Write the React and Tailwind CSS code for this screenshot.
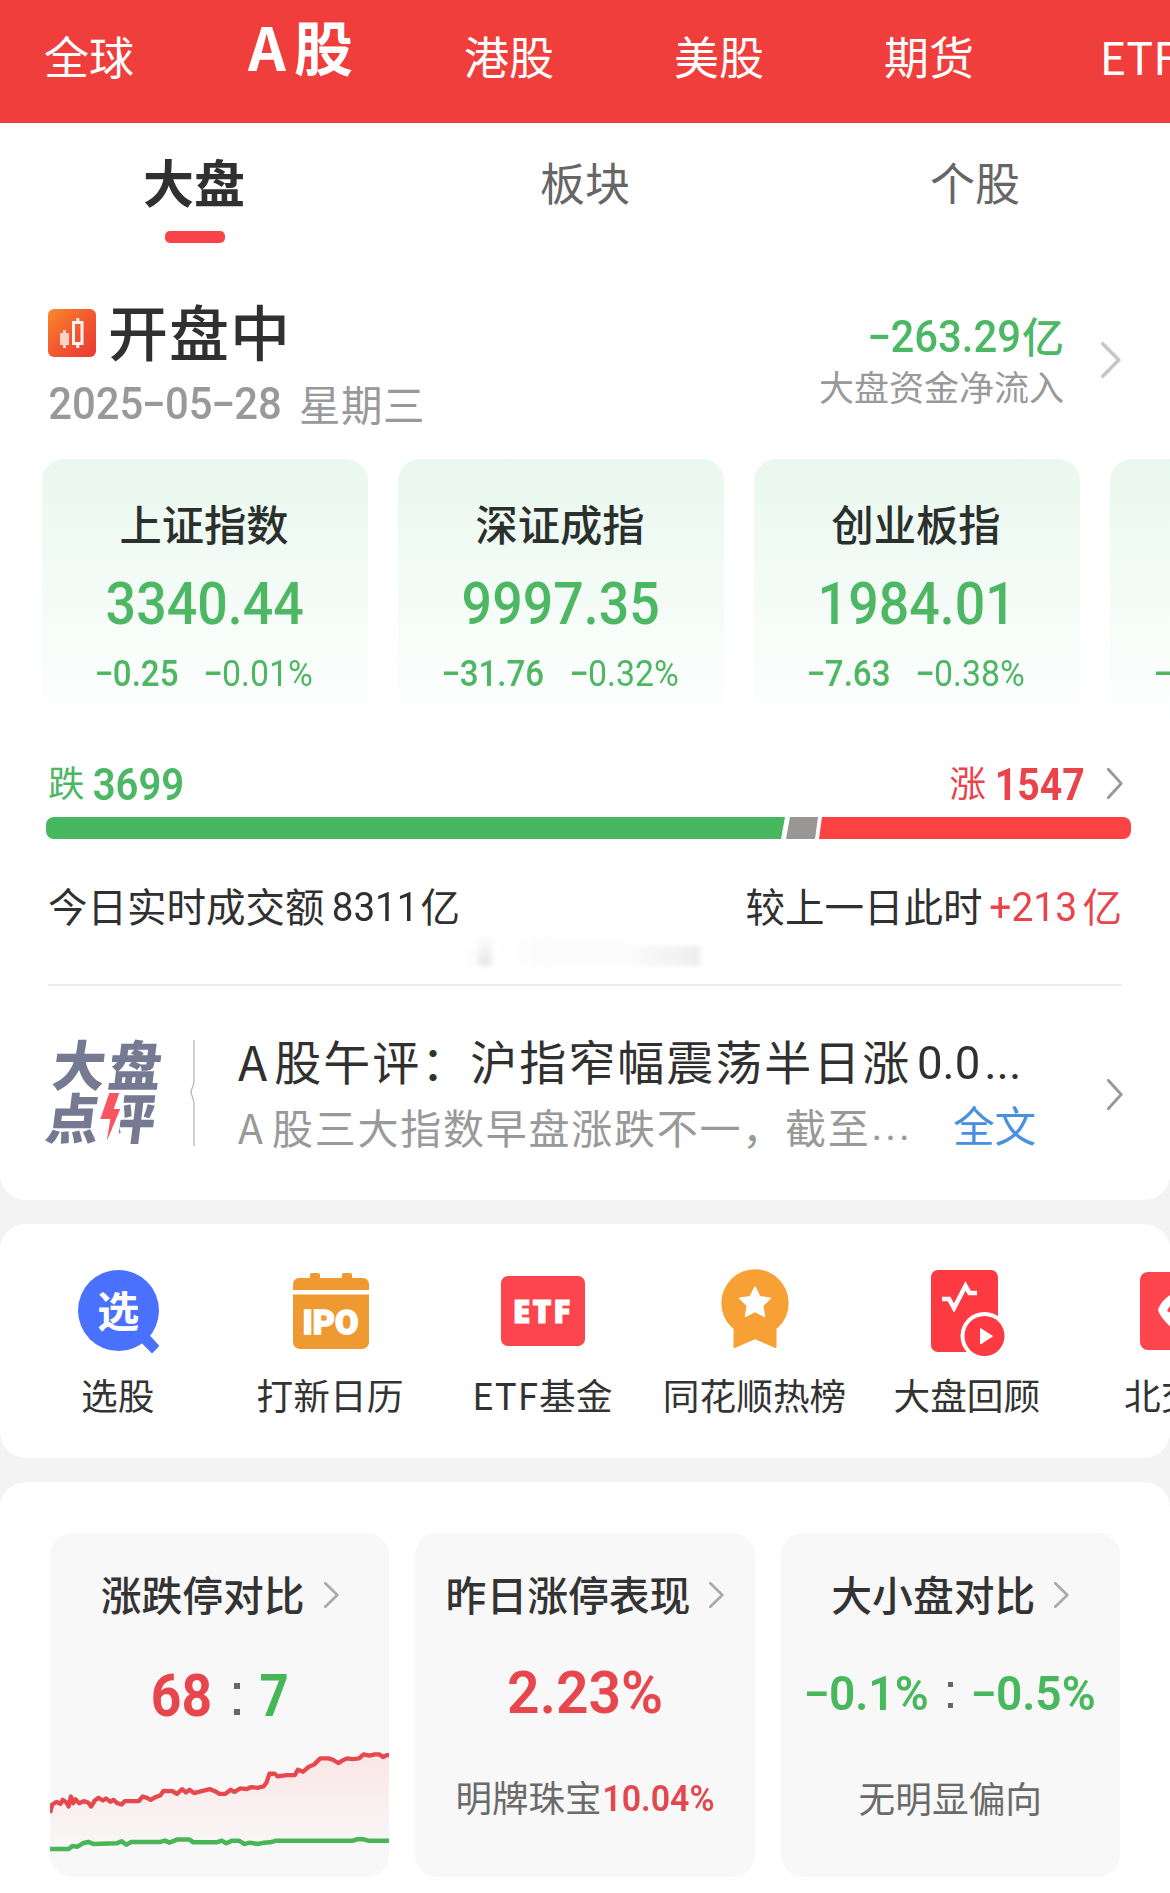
import React from "react";

const CJK = "font-['Noto_Sans_CJK_SC',sans-serif]";

// Narrow numeric text: a fixed-width box with horizontally condensed digits centred in it.
function Num({ children, box, scale, className = "" }) {
  return (
    <span className={`inline-flex shrink-0 justify-center whitespace-nowrap font-[Roboto,sans-serif] ${box} ${className}`}>
      <span className={`inline-block shrink-0 ${scale}`}>
        {children.split("").map((c, i) =>
          c === "-" ? (
            <span key={i} className="relative -top-[0.04em] inline-block w-[0.52em] scale-x-[1.65] text-center font-medium">-</span>
          ) : (
            c
          )
        )}
      </span>
    </span>
  );
}

function Chevron({ className, width = 3.2 }) {
  return (
    <svg viewBox="0 0 18 32" fill="none" stroke="currentColor" strokeWidth={width} className={className} preserveAspectRatio="none">
      <path d="M1.5 1.5 L16 16 L1.5 30.5" strokeLinejoin="round" strokeLinecap="round" />
    </svg>
  );
}

const markets = ["全球", "A股", "港股", "美股", "期货", "ETF"];

function Header() {
  return (
    <header className="h-[123px] overflow-hidden bg-[#ef3e3b] text-white">
      <nav className="-ml-4 flex w-[1260px] text-[45px] leading-none">
        {markets.map((m) =>
          m === "A股" ? (
            <div key={m} className="flex h-[90px] w-[210px] items-center justify-center gap-[8px] pl-[3px] text-[59px] font-bold">
              <span>A</span>
              <span>股</span>
            </div>
          ) : (
            <div key={m} className="flex h-[110px] w-[210px] items-center justify-center">{m}</div>
          )
        )}
      </nav>
    </header>
  );
}

function SubTabs() {
  return (
    <div className="grid h-[120px] grid-cols-3 pt-[31px] text-center text-[45px] leading-[55px] text-[#666]">
      <div className="flex flex-col items-center">
        <span className="pr-0.5 text-[51px] font-bold text-[#303030]">大盘</span>
        <span className="mt-[22px] h-3 w-[60px] rounded-[5px] bg-[#fa4349]" />
      </div>
      <div>板块</div>
      <div>个股</div>
    </div>
  );
}

function Status() {
  return (
    <div className="mt-[57px] flex h-[126px] justify-between pr-[49px] pl-12">
      <div>
        <div className="flex h-[60px] items-center">
          <svg viewBox="0 0 48 48" className="mt-1.5 h-12 w-12">
            <defs>
              <linearGradient id="kline" x1="0" y1="0" x2="1" y2="1">
                <stop offset="0" stopColor="#f98a2c" />
                <stop offset="0.5" stopColor="#f2592f" />
                <stop offset="1" stopColor="#e93a33" />
              </linearGradient>
            </defs>
            <rect width="48" height="48" rx="6" fill="url(#kline)" />
            <path d="M12 24h9v12h-9z M15 21h3v18h-3z" fill="#ffd2c4" />
            <path d="M25.500 13.500h8.500v21h-8.500z M29.800 9v4 M29.800 35v4" fill="none" stroke="#fff4ee" strokeWidth="3" />
          </svg>
          <span className="ml-3 text-[60px] leading-[60px] font-medium tracking-[1px] text-[#303030]">开盘中</span>
        </div>
        <div className="mt-[22px] flex h-11 items-center text-[#999]">
          <Num box="w-[234px]" scale="scale-x-[0.95]" className="text-[44px] font-medium">2025-05-28</Num>
          <span className="ml-[17px] pb-0.5 text-[41.500px] leading-[44px] tracking-[0.500px]">星期三</span>
        </div>
      </div>
      <div className="flex">
        <div className="flex flex-col items-end pt-[15px]">
          <div className="flex h-11 items-center text-[#4cb765]">
            <Num box="w-[155px]" scale="scale-x-[0.93]" className="text-[45px] font-medium">-263.29</Num>
            <span className="pb-[5px] text-[42px] leading-[44px] font-medium">亿</span>
          </div>
          <div className="mt-[7px] h-10 text-[35px] leading-10 text-[#999]">大盘资金净流入</div>
        </div>
        <Chevron className="mt-[42px] ml-[37px] h-9 w-5 text-[#c6c6c6]" />
      </div>
    </div>
  );
}

const indices = [
  { name: "上证指数", value: "3340.44", diff: "-0.25", diffBox: "w-[82px]", pct: "-0.01%" },
  { name: "深证成指", value: "9997.35", diff: "-31.76", diffBox: "w-[101px]", pct: "-0.32%" },
  { name: "创业板指", value: "1984.01", diff: "-7.63", diffBox: "w-[82px]", pct: "-0.38%" },
  { name: "北证50", value: "1402.11", diff: "-13.42", diffBox: "w-[101px]", pct: "-0.95%" },
];

function IndexCards() {
  return (
    <div className="mt-[33px] flex gap-[30px] overflow-hidden pl-[42px]">
      {indices.map((c) => (
        <div key={c.name} className="flex h-[272px] w-[326px] shrink-0 flex-col items-center rounded-[22px] bg-linear-to-b from-[#e9f8ef] to-white pt-[34px]">
          <div className="h-[60px] pr-0.5 text-[42.300px] leading-[60px] font-medium text-[#2c302d]">{c.name}</div>
          <Num box="w-[200px]" scale="scale-x-[0.895]" className="mt-[21px] h-[60px] text-[60px] leading-[60px] font-medium text-[#4db764]">{c.value}</Num>
          <div className="mt-5 flex h-10 gap-[26px] text-[36px] leading-10 text-[#4db764]">
            <Num box={c.diffBox} scale="scale-x-[0.92]" className="font-medium">{c.diff}</Num>
            <Num box="w-[110px]" scale="scale-x-[0.94]">{c.pct}</Num>
          </div>
        </div>
      ))}
    </div>
  );
}

function Breadth() {
  return (
    <>
      <div className="mt-[33px] flex h-10 justify-between pr-[47px] pl-12 leading-10">
        <div className="flex text-[#4cb765]">
          <span className="-mt-0.5 text-[36.500px]">跌</span>
          <Num box="ml-[7px] w-[94px] pt-px" scale="scale-x-[0.89]" className="text-[45px] font-semibold">3699</Num>
        </div>
        <div className="flex text-[#ea444b]">
          <span className="-mt-0.5 text-[36.500px]">涨</span>
          <Num box="ml-[7px] w-[94px] pt-px" scale="scale-x-[0.87]" className="text-[45px] font-bold">1547</Num>
          <Chevron className="mt-1 ml-[20px] h-[31px] w-4 text-[#999]" />
        </div>
      </div>
      <div className="mt-[13px] ml-[46px] flex h-[22px] w-[1085px] gap-px overflow-hidden rounded-[8px]">
        <div className="w-[739px] bg-[#47b85f] [clip-path:polygon(0_0,100%_0,calc(100%-4px)_100%,0_100%)]" />
        <div className="w-[32px] bg-[#999696] [clip-path:polygon(4px_0,100%_0,calc(100%-3px)_100%,0_100%)]" />
        <div className="flex-1 bg-[#fe4342] [clip-path:polygon(3px_0,100%_0,100%_100%,0_100%)]" />
      </div>
      <div className="relative mx-12 mt-[41px] flex h-[106px] justify-between border-b-2 border-[#ececec] text-[39.5px] leading-[50px] text-[#303030]">
        <div className="flex">
          <span>今日实时成交额</span>
          <Num box="ml-[8px] h-[52px] w-[86px]" scale="scale-x-[0.94]" className="text-[41px] leading-[54px]">8311</Num>
          <span className="ml-0.5">亿</span>
        </div>
        <div className="flex">
          <span>较上一日此时</span>
          <span className="flex text-[#ea444b]">
            <Num box="ml-[5px] h-[52px] w-[92px]" scale="scale-x-[0.95]" className="text-[41px] leading-[54px]">+213</Num>
            <span className="ml-[3px]">亿</span>
          </span>
        </div>
        <div className="absolute top-[50px] left-[418px] flex h-9 w-[234px] items-end blur-[2px]">
          <div className="h-4 w-3 bg-[#fcfcfc]" />
          <div className="h-[33px] w-[14px] bg-linear-to-b from-white to-[#e8e8e8]" />
          <div className="h-7 flex-1 bg-linear-to-r from-white via-[#fbfbfb] to-[#fbfbfb]" />
          <div className="h-5 w-[76px] bg-linear-to-r from-[#fcfcfc] to-[#eeeeee]" />
        </div>
      </div>
    </>
  );
}

function Commentary() {
  return (
    <div className="flex h-[212px] pl-12">
      <div className="relative mt-[52px] mr-[-2px] ml-0.5 grid h-[106px] w-[114px] -skew-x-[7deg] grid-cols-[56px_58px] text-[54px] leading-[50px] font-black text-[#757a92]">
        <span className="h-[53px] w-[54px] origin-left scale-x-[0.98]">大</span>
        <span className="h-[53px] w-[54px] origin-left scale-x-[0.98]">盘</span>
        <span className="h-[53px] w-[54px] origin-left scale-x-[0.98]">点</span>
        <span className="h-[53px] w-[54px] origin-left scale-x-[0.98] [clip-path:inset(-10px_-10px_-10px_34%)]">评</span>
        <svg viewBox="0 0 20 50" className="absolute top-[54px] left-[53px] h-[50px] w-[21px] skew-x-[7deg]">
          <path d="M9 1 L19 1 L13.500 17 L20 17 L6.500 49 L10 27 L0 27 Z" fill="#fa5560" />
        </svg>
      </div>
      <svg viewBox="0 0 8 106" className="mt-[54px] ml-[26px] h-[106px] w-2" fill="none" stroke="#b8b8b8" strokeWidth="1.300">
        <path d="M6 0V41C6 47 3 49 3 52C3 55 6 58 6 64V106" />
      </svg>
      <div className="mt-[44px] ml-[42px] w-[800px]">
        <div className="flex h-[60px] leading-[60px] whitespace-nowrap text-[#303030]">
          <span className="text-[48px]">A</span>
          <span className="ml-[7px] text-[47px] tracking-[2px]">股午评：沪指窄幅震荡半日涨</span>
          <Num box="ml-[3px] h-[60px] w-[68px]" scale="scale-x-[0.97]" className="pt-[3px] text-[47px]">0.0</Num>
          <span className="ml-0.5 font-[Roboto] text-[47px] leading-[65px]">...</span>
        </div>
        <div className="mt-[11px] flex h-[50px] text-[41px] leading-[51px] whitespace-nowrap text-[#999]">
          <span>A</span>
          <span className="ml-[9px] tracking-[1.750px]">股三大指数早盘涨跌不一，截至</span>
          <span className="ml-px font-[Roboto] tracking-[3px]">...</span>
          <span className="-mt-0.5 ml-[40px] text-[41.500px] leading-[50px] text-[#4a8fdc]">全文</span>
        </div>
      </div>
      <Chevron className="mt-[93px] ml-[69px] h-[31px] w-4 text-[#999]" />
    </div>
  );
}

const iconText = "absolute inset-0 flex items-center justify-center leading-none text-white";

const shortcuts = [
  {
    label: "选股",
    icon: (
      <>
        <svg viewBox="0 0 90 90" className="h-[90px] w-[90px]">
          <circle cx="45.500" cy="45.500" r="40.500" fill="#4a70fe" />
          <path d="M70 78 L76 71 L85 81 L79 87 Z" fill="#4a70fe" stroke="#4a70fe" strokeWidth="2" strokeLinejoin="round" />
        </svg>
        <span className={`${iconText} pb-[3px] text-[42px] font-bold`}>选</span>
      </>
    ),
  },
  {
    label: "打新日历",
    icon: (
      <>
        <svg viewBox="0 0 90 90" className="h-[90px] w-[90px]" fill="#ee9a30">
          <rect x="25" y="8" width="10" height="12" rx="2" />
          <rect x="57" y="8" width="10" height="12" rx="2" />
          <path d="M8 25V19a6 6 0 0 1 6-6H78a6 6 0 0 1 6 6V25Z" />
          <path d="M8 29.500H84V77a7 7 0 0 1-7 7H15a7 7 0 0 1-7-7Z" />
        </svg>
        <span className={`${iconText} pt-[23px] font-[Roboto,sans-serif] text-[34px] font-black [-webkit-text-stroke:1.5px_#fff]`}>IPO</span>
      </>
    ),
  },
  {
    label: "ETF基金",
    icon: (
      <>
        <svg viewBox="0 0 90 90" className="h-[90px] w-[90px]">
          <rect x="3" y="11" width="84" height="70" rx="7" fill="#fc454d" />
        </svg>
        <span className={`${iconText} pt-px font-['Noto_Sans',sans-serif] text-[32px] font-black tracking-[2px] [-webkit-text-stroke:1px_#fff]`}>ETF</span>
      </>
    ),
  },
  {
    label: "同花顺热榜",
    icon: (
      <svg viewBox="0 0 90 90" className="h-[90px] w-[90px]">
        <circle cx="45" cy="38" r="33.700" fill="#f7a035" />
        <path d="M24.500 58H65.500V82L45 73L24.500 82Z" fill="#f7a035" stroke="#f7a035" strokeWidth="2" strokeLinejoin="round" />
        <path d="M45 22l4.700 9.700 10.600 1.500-7.700 7.500 1.900 10.700-9.500-5.100-9.500 5.100 1.900-10.700-7.700-7.500 10.600-1.500z" fill="#fff" stroke="#fff" strokeWidth="1.500" strokeLinejoin="round" />
      </svg>
    ),
  },
  {
    label: "大盘回顾",
    icon: (
      <svg viewBox="0 0 90 92" className="h-[92px] w-[90px]">
        <rect x="9" y="5" width="67" height="82" rx="7" fill="#fd3a41" />
        <path d="M20 34H27L32 43L43.500 21L47.500 28H55" fill="none" stroke="#fff" strokeWidth="4.500" />
        <circle cx="62.500" cy="71" r="24" fill="#fff" />
        <circle cx="62.500" cy="71" r="20" fill="#fd3a41" />
        <path d="M58.500 63.500V79L70.500 71.200Z" fill="#fff" stroke="#fff" strokeLinejoin="round" />
      </svg>
    ),
  },
  {
    label: "北交所",
    icon: (
      <svg viewBox="0 0 90 90" className="h-[90px] w-[90px]">
        <rect x="5" y="7" width="80" height="78" rx="8" fill="#fc454d" />
        <path d="M45 25Q27 32 23 45Q26 55 45 70L60 55L50 47L45 52L32 46Q35 38 45 35Z" fill="#fff" />
      </svg>
    ),
  },
];

function Shortcuts() {
  return (
    <section className="mt-6 h-[234px] overflow-hidden rounded-[26px] bg-white pt-[41px]">
      <div className="ml-3 flex w-[1274px]">
        {shortcuts.map((s) => (
          <div key={s.label} className="flex h-[180px] w-[212.300px] flex-col items-center">
            <div className="relative h-[90px] w-[90px]">{s.icon}</div>
            <div className="mt-[14px] h-[50px] pr-px text-[36.700px] leading-[50px] whitespace-nowrap text-[#333]">
              {s.label === "ETF基金" ? <><span className="tracking-[1px]">ETF</span>基金</> : s.label}
            </div>
          </div>
        ))}
      </div>
    </section>
  );
}

const riseLine =
  "134,937 140,912 152,904 162,910 168,898 178,906 184,918 190,888 196,908 202,896 212,908 224,902 236,906 244,918 254,900 264,892 276,900 284,894 296,904 304,898 314,908 326,912 334,902 352,902 372,902 382,888 394,892 404,898 416,890 430,884 438,871 462,872 474,880 488,866 498,876 508,868 520,878 540,872 562,866 576,872 588,880 604,880 618,868 628,874 644,864 660,866 674,860 690,862 706,858 714,846 722,820 736,820 744,828 768,824 790,824 798,808 812,814 826,800 842,792 858,774 880,774 892,778 906,788 918,780 930,774 944,776 962,774 974,762 990,766 1004,762 1016,762 1026,770 1036,764 1043,764";
const fallLine =
  "134,1045 184,1045 194,1036 208,1038 222,1028 236,1024 250,1030 312,1028 326,1022 338,1032 352,1024 430,1024 442,1020 454,1026 474,1017 508,1017 518,1025 580,1025 594,1020 606,1028 622,1020 640,1020 654,1030 670,1026 690,1030 708,1026 724,1025 740,1020 946,1020 956,1016 974,1016 986,1020 1043,1020";

function TrendChart() {
  return (
    <svg viewBox="134 740 909 320" preserveAspectRatio="none" className="h-[107px] w-full" fill="none">
      <defs>
        <linearGradient id="rise" x1="0" y1="0" x2="0" y2="1">
          <stop offset="0" stopColor="#fbe6e7" />
          <stop offset="1" stopColor="#f9f7f7" />
        </linearGradient>
      </defs>
      <polygon points={`${riseLine} 1043,1018 134,1040`} fill="url(#rise)" />
      <polyline points={riseLine} stroke="#e6484e" strokeWidth="4.300" strokeLinejoin="round" vectorEffect="non-scaling-stroke" />
      <polyline points={fallLine} stroke="#49b556" strokeWidth="4.500" strokeLinejoin="round" vectorEffect="non-scaling-stroke" />
    </svg>
  );
}

function StatCard({ title, children }) {
  return (
    <div className="flex h-[344px] flex-1 flex-col items-center overflow-hidden rounded-[22px] bg-[#f8f8f8] pt-[31px]">
      <div className="flex h-[60px] items-center text-[40.800px] leading-[60px] font-medium whitespace-nowrap text-[#333]">
        {title}
        <Chevron className="mt-0.5 ml-[19px] h-[26px] w-[15px] text-[#aaa]" />
      </div>
      {children}
    </div>
  );
}

function Stats() {
  return (
    <section className="mt-6 h-[411px] rounded-t-[26px] bg-white pt-[51px]">
      <div className="mx-[50px] flex gap-[26px]">
        <StatCard title="涨跌停对比">
          <div className="mt-[42px] flex h-[60px] text-[60px] leading-[60px] font-bold">
            <Num box="w-[64px]" scale="scale-x-[0.89]" className="pl-0.5 text-[#e8464d]">68</Num>
            <Colon className="mt-[17px] mr-[19px] ml-[21px] h-[32px] w-1.5" />
            <Num box="w-[32px]" scale="scale-x-[0.85]" className="text-[#47b656]">7</Num>
          </div>
          <div className="mt-[21px] w-full">
            <TrendChart />
          </div>
        </StatCard>
        <StatCard title="昨日涨停表现">
          <Num box="w-[160px]" scale="scale-x-[0.95]" className="mt-[39px] h-[60px] text-[60px] leading-[60px] font-semibold text-[#e8464d]">2.23%</Num>
          <div className="mt-[54px] flex h-10 text-[36.500px] leading-10 text-[#6a6a6a]">
            明牌珠宝
            <Num box="ml-px h-[42px] w-[112px]" scale="scale-x-[0.93]" className="leading-[44px] font-semibold text-[#e3484f]">10.04%</Num>
          </div>
        </StatCard>
        <StatCard title="大小盘对比">
          <div className="mt-[40px] flex h-[60px] text-[49px] leading-[60px] font-semibold text-[#47b85c]">
            <Num box="w-[124px]" scale="scale-x-[0.94]">-0.1%</Num>
            <Colon className="mx-[19px] mt-[18px] h-[26px] w-[5px]" />
            <Num box="w-[124px]" scale="scale-x-[0.94]">-0.5%</Num>
          </div>
          <div className="mt-[53px] h-10 text-[36.700px] leading-10 text-[#6a6a6a]">无明显偏向</div>
        </StatCard>
      </div>
    </section>
  );
}

function Colon({ className }) {
  return (
    <span className={`flex flex-col justify-between ${className}`}>
      <span className="aspect-square w-full bg-[#666]" />
      <span className="aspect-square w-full bg-[#666]" />
    </span>
  );
}

export default function App() {
  return (
    <div className={`h-[1893px] w-[1170px] overflow-hidden bg-[#f3f3f3] ${CJK}`}>
      <Header />
      <section className="h-[1077px] overflow-hidden rounded-b-[26px] bg-white">
        <SubTabs />
        <Status />
        <IndexCards />
        <Breadth />
        <Commentary />
      </section>
      <Shortcuts />
      <Stats />
    </div>
  );
}
